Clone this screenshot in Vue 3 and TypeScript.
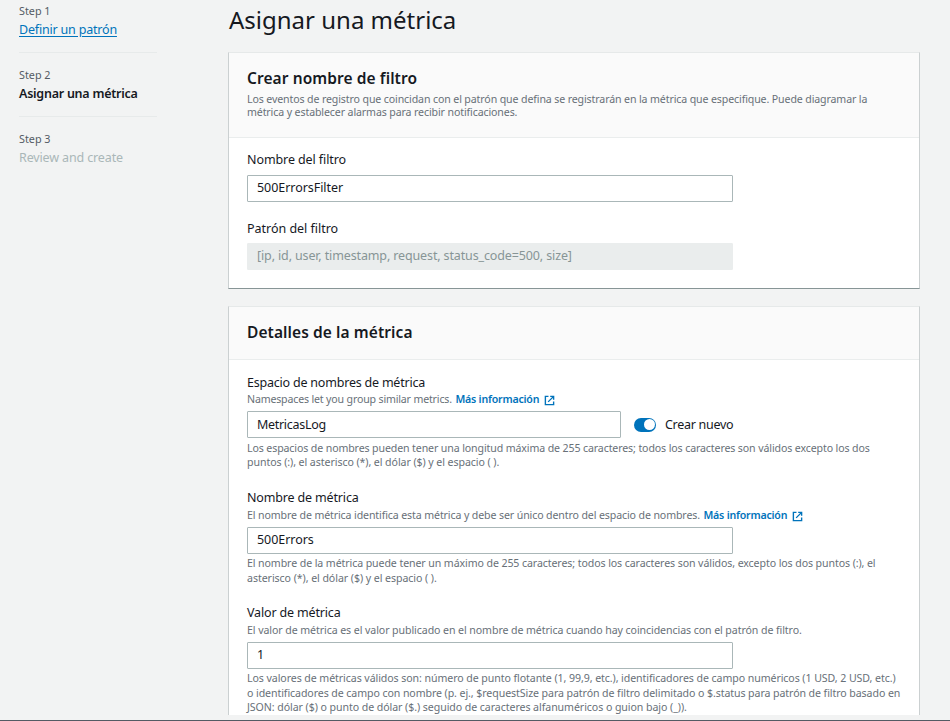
<script setup lang="ts">
import { ref } from 'vue'

interface Line {
  text: string
  tracking: number
}

interface Step {
  name: string
  label: Line
  state: 'link' | 'active' | 'pending'
}

interface MetricField {
  id: string
  label: Line
  hint: Line
  info: boolean
  value: Line
  toggle: boolean
  notes: Line[]
}

const line = (text: string, tracking = 0): Line => ({ text, tracking })
const track = (l: Line) => ({ letterSpacing: `${l.tracking}px` })

const steps: Step[] = [
  { name: 'Step 1', label: line('Definir un patrón', -0.19), state: 'link' },
  { name: 'Step 2', label: line('Asignar una métrica', -0.25), state: 'active' },
  { name: 'Step 3', label: line('Review and create', -0.135), state: 'pending' },
]

const intro: Line[] = [
  line('Los eventos de registro que coincidan con el patrón que defina se registrarán en la métrica que especifique. Puede diagramar la', -0.12),
  line('métrica y establecer alarmas para recibir notificaciones.', -0.115),
]

const filterName = line('500ErrorsFilter', -0.05)
const filterPattern = line('[ip, id, user, timestamp, request, status_code=500, size]', -0.13)

const fields: MetricField[] = [
  {
    id: 'namespace',
    label: line('Espacio de nombres de métrica', -0.21),
    hint: line('Namespaces let you group similar metrics.', -0.165),
    info: true,
    value: line('MetricasLog', -0.3),
    toggle: true,
    notes: [
      line('Los espacios de nombres pueden tener una longitud máxima de 255 caracteres; todos los caracteres son válidos excepto los dos', -0.118),
      line('puntos (:), el asterisco (*), el dólar ($) y el espacio ( ).', -0.07),
    ],
  },
  {
    id: 'name',
    label: line('Nombre de métrica', -0.16),
    hint: line('El nombre de métrica identifica esta métrica y debe ser único dentro del espacio de nombres.', -0.116),
    info: true,
    value: line('500Errors', -0.05),
    toggle: false,
    notes: [
      line('El nombre de la métrica puede tener un máximo de 255 caracteres; todos los caracteres son válidos, excepto los dos puntos (:), el', -0.093),
      line('asterisco (*), el dólar ($) y el espacio ( ).', -0.06),
    ],
  },
  {
    id: 'value',
    label: line('Valor de métrica', -0.16),
    hint: line('El valor de métrica es el valor publicado en el nombre de métrica cuando hay coincidencias con el patrón de filtro.', -0.08),
    info: false,
    value: line('1'),
    toggle: false,
    notes: [
      line('Los valores de métricas válidos son: número de punto flotante (1, 99,9, etc.), identificadores de campo numéricos (1 USD, 2 USD, etc.)', -0.075),
      line('o identificadores de campo con nombre (p. ej., $requestSize para patrón de filtro delimitado o $.status para patrón de filtro basado en', -0.082),
      line('JSON: dólar ($) o punto de dólar ($.) seguido de caracteres alfanuméricos o guion bajo (_)).', -0.065),
    ],
  },
]

const createNew = ref(true)
</script>

<template>
  <div class="page">
    <div class="viewport">
      <nav class="steps">
        <div v-for="s in steps" :key="s.name" class="step">
          <div class="step-name">{{ s.name }}</div>
          <div class="step-label" :class="s.state">
            <span :style="track(s.label)">{{ s.label.text }}</span>
          </div>
        </div>
      </nav>

      <main class="content">
        <h1>Asignar una métrica</h1>

        <section class="panel">
          <header class="panel-head intro">
            <h2>Crear nombre de filtro</h2>
            <p v-for="l in intro" :key="l.text" :style="track(l)">{{ l.text }}</p>
          </header>
          <div class="panel-body">
            <div class="label name-label">Nombre del filtro</div>
            <div class="input" :style="track(filterName)">{{ filterName.text }}</div>
            <div class="label pattern-label">Patrón del filtro</div>
            <div class="input disabled" :style="track(filterPattern)">{{ filterPattern.text }}</div>
          </div>
        </section>

        <section class="panel">
          <header class="panel-head">
            <h2 class="details">Detalles de la métrica</h2>
          </header>
          <div class="panel-body metric">
            <div v-for="f in fields" :key="f.id" class="field" :class="f.id">
              <div class="label" :style="track(f.label)">{{ f.label.text }}</div>
              <div class="hint">
                <span :style="track(f.hint)">{{ f.hint.text }}</span>
                <a v-if="f.info" class="info">
                  <span>Más información</span>
                  <svg viewBox="0 0 16 16" width="11" height="11" fill="none" stroke="currentColor" stroke-width="2">
                    <path d="M6.5 2H2v12h12V9.5" />
                    <path d="M9 2H14v5M14 2L6 10" />
                  </svg>
                </a>
              </div>
              <div class="row">
                <div class="input" :style="track(f.value)">{{ f.value.text }}</div>
                <label v-if="f.toggle" class="toggle" @click="createNew = !createNew">
                  <span class="switch" :class="{ on: createNew }"><i /></span>
                  <span class="toggle-text">Crear nuevo</span>
                </label>
              </div>
              <div class="notes">
                <p v-for="n in f.notes" :key="n.text" :style="track(n)">{{ n.text }}</p>
              </div>
            </div>
          </div>
        </section>
      </main>
    </div>
    <footer class="edge" />
  </div>
</template>

<style>
body {
  margin: 0;
  overflow: hidden;
}
</style>

<style scoped>
.page {
  box-sizing: border-box;
  height: 721px;
  display: flex;
  flex-direction: column;
  background: #f2f3f3;
  color: #16191f;
  font: 12.5px/18px "Noto Sans", "Open Sans", sans-serif;
  white-space: nowrap;
}
h1, h2, p {
  margin: 0;
}
.viewport {
  height: 715px;
  overflow: hidden;
  display: flex;
}
.edge {
  height: 5px;
  border-bottom: 1px solid #545b64;
}
.steps {
  width: 138px;
  padding: 3px 71px 0 19px;
  flex: none;
}
.step + .step {
  border-top: 1px solid #e7eaea;
  margin-top: 13px;
  padding-top: 14px;
}
.step-name {
  font-size: 10.8px;
  line-height: 16px;
  margin-bottom: 2px;
  color: #545b64;
}
.link {
  color: #0073bb;
  text-decoration: underline;
  text-underline-offset: 2px;
}
.active {
  font-weight: 600;
}
.pending {
  color: #aab7b8;
}
.content {
  width: 692px;
  padding-top: 5px;
  flex: none;
}
h1 {
  margin: 0 0 17px 1px;
  font-size: 24px;
  line-height: 30px;
  font-weight: 400;
}
.panel {
  box-sizing: border-box;
  border: 1px solid #cbd0d1;
  border-top-color: #e6e9e9;
  border-bottom-color: #879596;
  background: #fff;
  margin-bottom: 17px;
}
.panel-head {
  padding: 15px 18px 17px;
  background: #fafafa;
  border-bottom: 1px solid #eaeded;
}
.panel-head.intro {
  padding-bottom: 18px;
}
h2 {
  font-size: 15.5px;
  line-height: 20px;
  font-weight: 600;
  letter-spacing: 0.08px;
}
.intro h2 {
  margin-bottom: 5px;
}
.intro p {
  font-size: 10.6px;
  line-height: 13px;
  color: #687078;
}
.panel-body {
  padding: 12px 18px 18px;
}
.panel-body.metric {
  padding-top: 13px;
}
.label {
  height: 18px;
  line-height: 20px;
}
.name-label {
  letter-spacing: -0.09px;
  margin-bottom: 7px;
}
.pattern-label {
  letter-spacing: -0.02px;
  margin: 17px 0 6px;
}
.input {
  box-sizing: border-box;
  width: 486px;
  height: 27px;
  padding: 0 9px;
  border: 1px solid #aab7b8;
  border-radius: 1px;
  line-height: 24px;
  background: #fff;
}
.input.disabled {
  background: #eaeded;
  border-color: #eaeded;
  color: #879596;
}
.hint {
  display: flex;
  align-items: center;
  height: 15px;
  padding-top: 1px;
  margin-bottom: 4px;
  font-size: 10.6px;
  line-height: 15px;
  color: #687078;
}
.name .hint,
.value .hint {
  margin-top: 1px;
}
.info {
  display: flex;
  align-items: center;
  gap: 5px;
  margin-left: 3.5px;
  color: #0073bb;
  font-weight: 600;
  letter-spacing: -0.2px;
}
.info svg {
  margin-top: 1px;
}
.row {
  display: flex;
  align-items: center;
}
.namespace .input {
  width: 374px;
  line-height: 26px;
}
.toggle {
  display: flex;
  align-items: center;
  margin-left: 13px;
}
.switch {
  box-sizing: border-box;
  width: 22px;
  height: 14px;
  padding: 1.5px;
  border-radius: 7px;
  background: #879596;
  display: flex;
}
.switch.on {
  background: #0073bb;
  justify-content: flex-end;
}
.switch i {
  width: 11px;
  height: 11px;
  border-radius: 50%;
  background: #fff;
}
.toggle-text {
  margin-left: 9px;
  letter-spacing: -0.28px;
}
.notes {
  margin: 2px 0 18px;
  font-size: 10.6px;
  line-height: 14.5px;
  color: #687078;
}
.namespace .notes {
  margin: 3px 0 19px;
  line-height: 14px;
}
</style>
